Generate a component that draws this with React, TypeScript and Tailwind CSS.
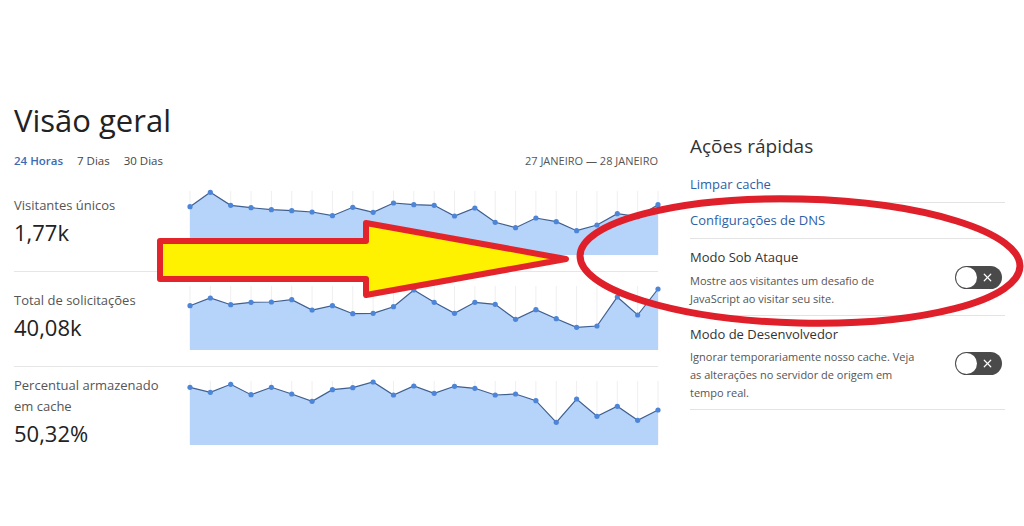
import { X } from "lucide-react";

const font = { fontFamily: '"Open Sans", "Noto Sans", sans-serif' };

const series = [
  {
    label: ["Visitantes únicos"],
    value: "1,77k",
    points: [15.7, 1.3, 14.3, 16.7, 18.7, 19.7, 21, 24.7, 16.3, 21.3, 12, 13.7, 14.3, 25, 17, 31.3, 36.7, 27, 30.7, 39.7, 34, 22.7, 25.7, 13.7],
  },
  {
    label: ["Total de solicitações"],
    value: "40,08k",
    points: [19.7, 12, 18.7, 16.3, 16, 13.7, 24, 19.7, 27.7, 27.3, 20.7, 4, 16.3, 27.3, 16.3, 18.3, 33.3, 23.7, 32.7, 41.3, 40, 11, 29, 3],
  },
  {
    label: ["Percentual armazenado", "em cache"],
    value: "50,32%",
    points: [6.3, 11.3, 3.3, 13.7, 6.3, 13, 20.3, 8.7, 6.7, 1, 14, 5, 12.3, 5.3, 7.3, 14, 13, 19.7, 41.3, 18, 35.3, 25.3, 39.3, 29],
  },
];

const W = 468;
const H = 64;

function Sparkline({ points }: { points: number[] }) {
  const step = W / (points.length - 1);
  const xy = points.map((y, i) => [i * step, y] as const);
  const line = xy.map(([x, y], i) => `${i ? "L" : "M"}${x.toFixed(1)},${y}`).join(" ");
  const area = `${line} L${W},${H} L0,${H} Z`;
  return (
    <svg width={W} height={H} className="block overflow-visible shrink-0">
      {xy.map(([x], i) => (
        <line key={i} x1={x} x2={x} y1={0} y2={H} stroke="#efefef" strokeWidth={1} />
      ))}
      <path d={area} fill="#b6d3fa" />
      <path d={line} fill="none" stroke="#3f5f8e" strokeWidth={1.2} />
      {xy.map(([x, y], i) => (
        <circle key={i} cx={x} cy={y} r={2.6} fill="#4d86d8" />
      ))}
    </svg>
  );
}

function Toggle() {
  return (
    <div className="relative h-[23px] w-[47px] shrink-0 rounded-full bg-[#4a4a4a]">
      <div className="absolute left-[1px] top-[1px] h-[21px] w-[21px] rounded-full bg-white" />
      <X className="absolute right-[8px] top-[5px] h-[13px] w-[13px] text-white" strokeWidth={2.2} />
    </div>
  );
}

function Annotations() {
  return (
    <svg width={1024} height={526} className="pointer-events-none absolute left-0 top-0">
      <path
        d="M160,241 L366,241 L366,223 L566,259 L366,295 L366,279 L160,279 Z"
        fill="#fff200"
        stroke="#e3242b"
        strokeWidth={6}
        strokeLinejoin="round"
      />
      <ellipse
        cx={800}
        cy={261}
        rx={220}
        ry={62}
        transform="rotate(1.4 800 261)"
        fill="none"
        stroke="#df1f2a"
        strokeWidth={7}
      />
    </svg>
  );
}

export default function App() {
  return (
    <div className="relative h-[526px] w-[1024px] overflow-hidden bg-white" style={font}>
      <div className="flex gap-[32px] px-[14px] pt-[100px]">
        <div className="w-[644px]">
          <h1 className="h-[40px] text-[31px] leading-[40px] font-medium text-[#222]">Visão geral</h1>
          <div className="mt-[13px] flex h-[16px] items-center justify-between text-[11.5px] leading-[16px]">
            <div className="flex gap-[14px] text-[#444]">
              <span className="font-semibold text-[#3a6bb3]">24 Horas</span>
              <span>7 Dias</span>
              <span>30 Dias</span>
            </div>
            <span className="text-[11px] text-[#555]">27 JANEIRO — 28 JANEIRO</span>
          </div>
          <div className="mt-[8px]">
            {series.map((s, i) => (
              <div
                key={i}
                className={`pt-[14px] pb-4 ${i < series.length - 1 ? "border-b border-[#e6e6e6]" : ""}`}
              >
                <div className="flex h-[64px] items-center">
                  <div className="mb-[5px] w-[176px] shrink-0">
                    <div className="text-[13px] leading-[21px] text-[#555]">
                      {s.label.map((l) => (
                        <div key={l}>{l}</div>
                      ))}
                    </div>
                    <div className="mt-[2px] text-[22px] leading-[28px] text-[#222]">{s.value}</div>
                  </div>
                  <Sparkline points={s.points} />
                </div>
              </div>
            ))}
          </div>
        </div>

        <div className="mt-[32px] w-[315px]">
          <h2 className="text-[19px] leading-[28px] text-[#333]">Ações rápidas</h2>
          <div className="mt-[7px]">
            <div className="flex h-[36px] items-center border-b border-[#e3e3e3] text-[13px] text-[#2d61a6]">
              Limpar cache
            </div>
            <div className="flex h-[36px] items-center border-b border-[#e3e3e3] text-[13px] text-[#2d61a6]">
              Configurações de DNS
            </div>
            <div className="flex items-center justify-between border-b border-[#e3e3e3] pt-[8px] pb-[7px] pr-[3px]">
              <div>
                <div className="text-[13px] leading-[20px] text-[#333]">Modo Sob Ataque</div>
                <div className="mt-[5px] text-[11px] leading-[18px] text-[#555]">
                  Mostre aos visitantes um desafio de
                  <br />
                  JavaScript ao visitar seu site.
                </div>
              </div>
              <Toggle />
            </div>
            <div className="flex items-center justify-between border-b border-[#e3e3e3] pt-[8px] pb-[7px] pr-[3px]">
              <div>
                <div className="text-[13px] leading-[20px] text-[#333]">Modo de Desenvolvedor</div>
                <div className="mt-[4px] text-[11px] leading-[18px] text-[#555]">
                  Ignorar temporariamente nosso cache. Veja
                  <br />
                  as alterações no servidor de origem em
                  <br />
                  tempo real.
                </div>
              </div>
              <Toggle />
            </div>
          </div>
        </div>
      </div>
      <Annotations />
    </div>
  );
}
